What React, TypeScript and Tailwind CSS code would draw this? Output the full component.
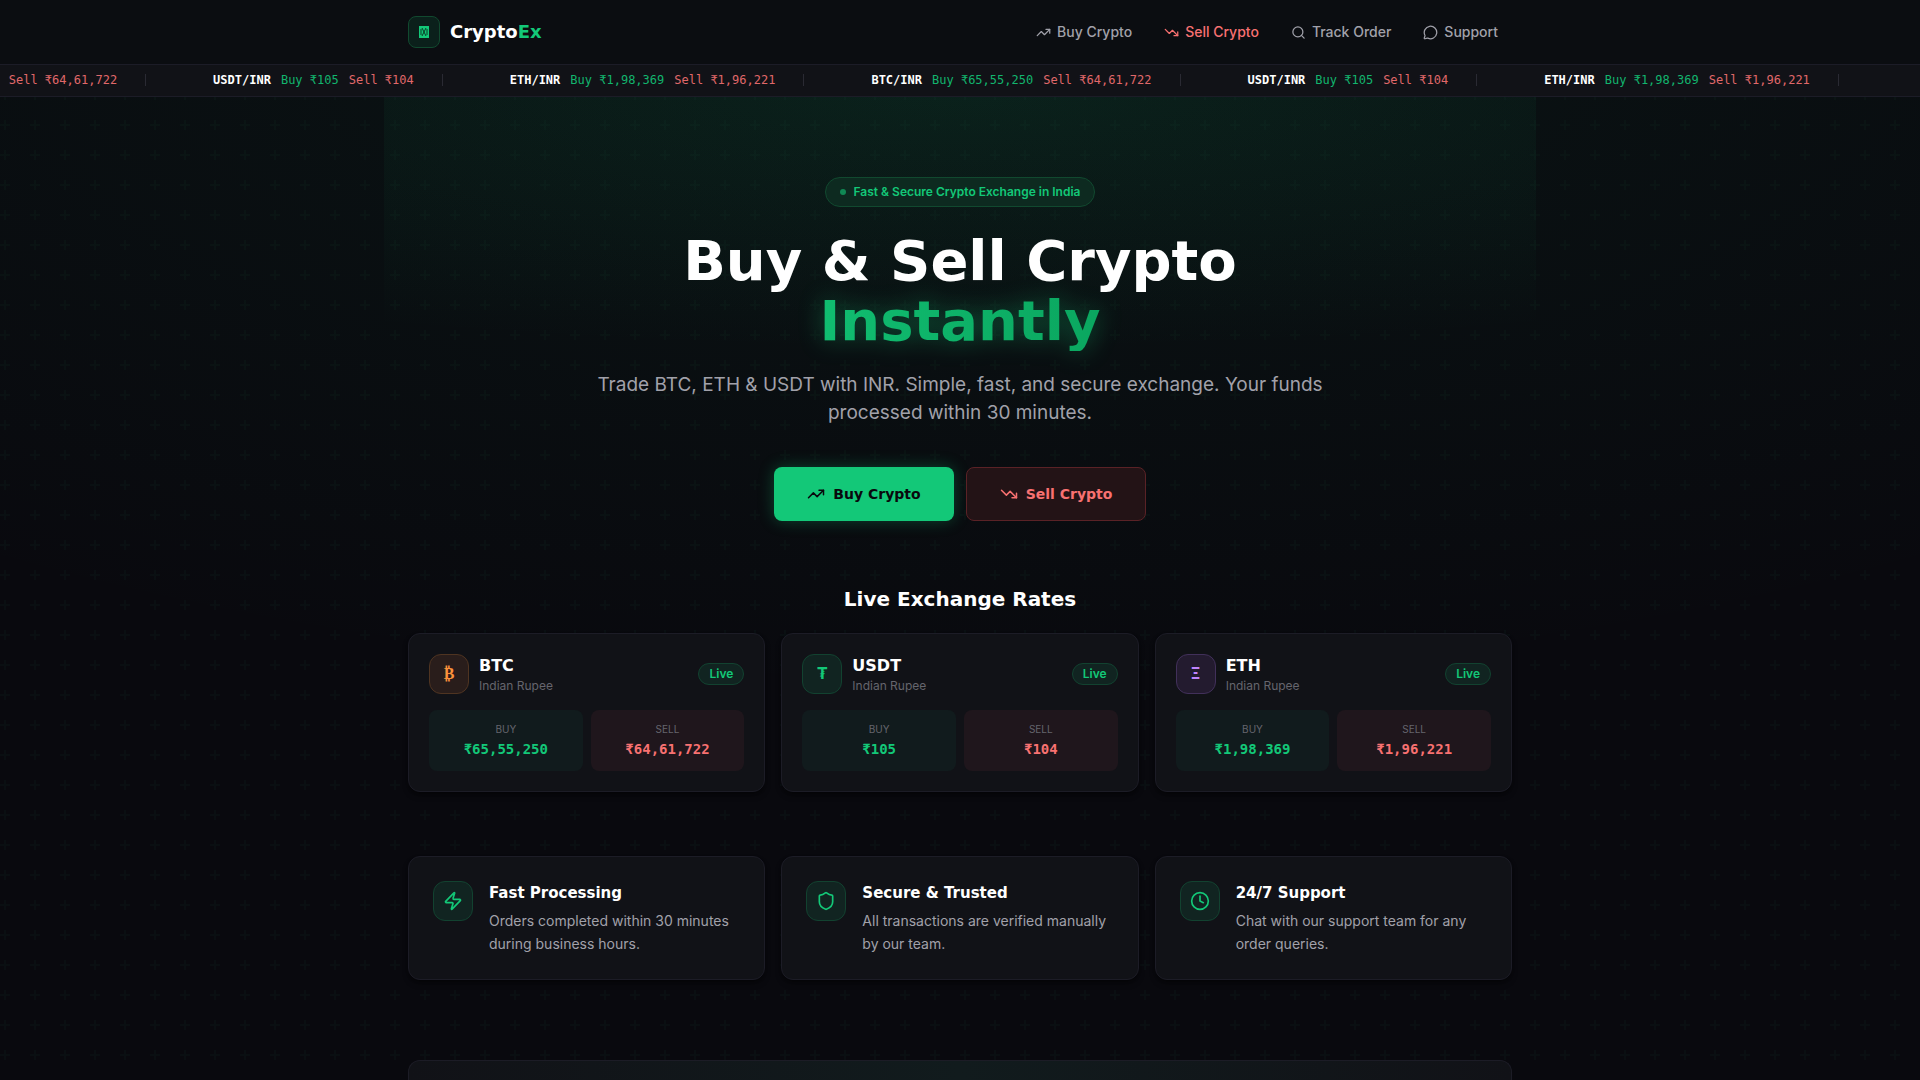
import type { ReactNode } from 'react'
import { Clock, MessageCircle, Search, Shield, TrendingDown, TrendingUp, Zap } from 'lucide-react'

const pairs = [
  { pair: 'BTC/INR', buy: '₹65,55,250', sell: '₹64,61,722' },
  { pair: 'USDT/INR', buy: '₹105', sell: '₹104' },
  { pair: 'ETH/INR', buy: '₹1,98,369', sell: '₹1,96,221' },
]

const tickerItems = [...pairs, ...pairs]

const rates = [
  {
    name: 'BTC',
    symbol: '₿',
    badge: 'border-[#4f3421] bg-[#291d1b] text-[#fb923c]',
    buy: '₹65,55,250',
    sell: '₹64,61,722',
  },
  {
    name: 'USDT',
    symbol: '₮',
    badge: 'border-[#124230] bg-[#112421] text-[#13c878]',
    buy: '₹105',
    sell: '₹104',
  },
  {
    name: 'ETH',
    symbol: 'Ξ',
    badge: 'border-[#41305a] bg-[#231b2f] text-[#c084fc]',
    buy: '₹1,98,369',
    sell: '₹1,96,221',
  },
]

const features = [
  {
    icon: Zap,
    title: 'Fast Processing',
    text: 'Orders completed within 30 minutes during business hours.',
  },
  {
    icon: Shield,
    title: 'Secure & Trusted',
    text: 'All transactions are verified manually by our team.',
  },
  {
    icon: Clock,
    title: '24/7 Support',
    text: 'Chat with our support team for any order queries.',
  },
]

function Backdrop() {
  return (
    <div className="pointer-events-none absolute inset-0 bg-[radial-gradient(ellipse_90%_65%_at_50%_0%,rgba(19,200,120,0.06),transparent)]">
      <svg className="h-full w-full text-[#13c878]" aria-hidden="true">
        <defs>
          <pattern id="plus" width="30" height="30" patternUnits="userSpaceOnUse">
            <path d="M6 4V0H4v4H0v2h4v4h2V6h4V4H6z" fill="currentColor" fillOpacity="0.03" />
          </pattern>
        </defs>
        <rect width="100%" height="100%" fill="url(#plus)" />
      </svg>
    </div>
  )
}

function NavLink({ icon, label, active }: { icon: ReactNode; label: string; active?: boolean }) {
  return (
    <a
      href="#"
      className={
        active
          ? 'flex items-center gap-1.5 px-3.5 py-2 text-sm font-medium text-[#f87171]'
          : 'flex items-center gap-1.5 px-3.5 py-2 text-sm font-medium text-[#a1a1aa] hover:text-white'
      }
    >
      {icon}
      {label}
    </a>
  )
}

function Navbar() {
  return (
    <header className="border-b border-[#1c1c27] bg-[#0b0d11]">
      <div className="mx-auto flex h-16 max-w-6xl items-center justify-between px-6">
        <a href="#" className="flex items-center gap-2.5">
          <span className="flex h-8 w-8 items-center justify-center rounded-lg border border-[#11492f] bg-[#0b201b]">
            <svg width="10" height="12" viewBox="0 0 10 12" aria-hidden="true">
              <rect width="10" height="12" fill="#13c878" />
              <path d="M3 2l4 8M7 2l-4 8M2 3v6M8 3v6" stroke="#0b3a27" />
            </svg>
          </span>
          <span className="font-['DejaVu_Sans',sans-serif] text-lg font-bold text-white">
            Crypto<span className="text-[#13c878]">Ex</span>
          </span>
        </a>
        <nav className="flex items-center gap-1">
          <NavLink icon={<TrendingUp size={15} />} label="Buy Crypto" />
          <NavLink icon={<TrendingDown size={15} />} label="Sell Crypto" active />
          <NavLink icon={<Search size={15} />} label="Track Order" />
          <NavLink icon={<MessageCircle size={15} />} label="Support" />
        </nav>
      </div>
    </header>
  )
}

function Ticker() {
  return (
    <div className="h-8 overflow-hidden border-b border-[#1c1c27] bg-[#111217]">
      <div className="-ml-[163px] flex h-full w-max items-center pb-0.5 font-['DejaVu_Sans_Mono',monospace] text-xs">
        {tickerItems.map((t, i) => (
          <div key={i} className="flex items-center whitespace-nowrap">
            <span className="mr-2.5 font-bold text-white">{t.pair}</span>
            <span className="mr-2.5 text-[#12b56e]">Buy {t.buy}</span>
            <span className="text-[#e0686a]">Sell {t.sell}</span>
            <span className="mr-[67px] ml-7 h-3 w-px bg-[#2a2a33]" />
          </div>
        ))}
      </div>
    </div>
  )
}

function Hero() {
  return (
    <section className="mx-auto flex w-full max-w-6xl flex-col items-center bg-[radial-gradient(ellipse_120%_60%_at_50%_0%,rgba(19,200,120,0.08),transparent)] px-6 pt-20 text-center">
      <div className="flex items-center gap-2 rounded-full border border-[#11492f] bg-[#0d2a20] px-3.5 py-1.5 text-xs font-semibold text-[#13c878]">
        <span className="h-1.5 w-1.5 rounded-full bg-[#13c878] opacity-60" />
        Fast &amp; Secure Crypto Exchange in India
      </div>
      <h1 className="mt-6 font-['DejaVu_Sans',sans-serif] text-[56px] leading-[60px] font-bold text-white">
        Buy &amp; Sell Crypto
        <span className="block bg-linear-to-r from-[#13c878] to-[#089c58] bg-clip-text text-transparent drop-shadow-[0_0_12px_rgba(19,200,120,0.4)]">
          Instantly
        </span>
      </h1>
      <p className="mt-5 max-w-3xl text-[19px] leading-7 text-[#a1a1aa]">
        Trade BTC, ETH &amp; USDT with INR. Simple, fast, and secure exchange. Your funds processed
        within 30 minutes.
      </p>
      <div className="mt-10 flex gap-3 font-['DejaVu_Sans',sans-serif] text-sm font-bold">
        <button className="flex h-[54px] w-[180px] items-center justify-center gap-2 rounded-lg bg-[#13c878] text-[#09090d] shadow-[0_0_16px_rgba(19,200,120,0.3)]">
          <TrendingUp size={18} />
          Buy Crypto
        </button>
        <button className="flex h-[54px] w-[180px] items-center justify-center gap-2 rounded-lg border border-[#5a2226] bg-[#231316] text-[#f87171]">
          <TrendingDown size={18} />
          Sell Crypto
        </button>
      </div>
    </section>
  )
}

function LiveRates() {
  return (
    <section className="mx-auto w-full max-w-6xl px-6 pt-16">
      <h2 className="mb-5 text-center font-['DejaVu_Sans',sans-serif] text-xl leading-7 font-bold text-white">
        Live Exchange Rates
      </h2>
      <div className="grid grid-cols-3 gap-4">
        {rates.map((r) => (
          <div key={r.name} className="rounded-xl border border-[#1c1c26] bg-[#111217] p-5 shadow-md shadow-black/40">
            <div className="mb-4 flex items-center gap-2.5">
              <span
                className={`flex h-10 w-10 items-center justify-center rounded-xl border font-['DejaVu_Sans_Mono',monospace] font-bold ${r.badge}`}
              >
                {r.symbol}
              </span>
              <div className="flex-1">
                <h3 className="font-['DejaVu_Sans',sans-serif] text-base leading-6 font-bold text-white">{r.name}</h3>
                <p className="text-xs text-[#65656d]">Indian Rupee</p>
              </div>
              <span className="rounded-full border border-[#124230] bg-[#112421] px-2.5 py-0.5 text-xs font-semibold text-[#13c878]">
                Live
              </span>
            </div>
            <div className="grid grid-cols-2 gap-2 text-center">
              <div className="rounded-lg bg-[#111b1d] py-3">
                <div className="mb-0.5 text-[10px] leading-[15px] text-[#65656d]">BUY</div>
                <div className="font-['DejaVu_Sans_Mono',monospace] text-sm font-bold text-[#13c878]">{r.buy}</div>
              </div>
              <div className="rounded-lg bg-[#1f161c] py-3">
                <div className="mb-0.5 text-[10px] leading-[15px] text-[#65656d]">SELL</div>
                <div className="font-['DejaVu_Sans_Mono',monospace] text-sm font-bold text-[#f87171]">{r.sell}</div>
              </div>
            </div>
          </div>
        ))}
      </div>
    </section>
  )
}

function Features() {
  return (
    <section className="mx-auto grid w-full max-w-6xl grid-cols-3 gap-4 px-6 pt-16">
      {features.map((f) => (
        <div key={f.title} className="flex gap-4 rounded-xl border border-[#1c1c26] bg-[#111217] p-6 shadow-md shadow-black/40">
          <span className="flex h-10 w-10 shrink-0 items-center justify-center rounded-xl border border-[#124230] bg-[#112421] text-[#13c878]">
            <f.icon size={20} />
          </span>
          <div>
            <h3 className="mb-1 font-['DejaVu_Sans',sans-serif] text-[15px] leading-6 font-bold text-white">{f.title}</h3>
            <p className="text-sm leading-[23px] text-[#a1a1aa]">{f.text}</p>
          </div>
        </div>
      ))}
    </section>
  )
}

export default function App() {
  return (
    <div className="relative min-h-screen bg-[#09090e] font-['Inter',sans-serif] antialiased">
      <Backdrop />
      <div className="relative flex min-h-screen flex-col">
        <Navbar />
        <Ticker />
        <main className="flex flex-1 flex-col">
          <Hero />
          <LiveRates />
          <Features />
          <section className="mx-auto flex w-full max-w-6xl flex-1 px-6 pt-20">
            <div className="flex-1 rounded-t-xl border-x border-t border-[#1c1c26] bg-linear-to-r from-[#111217] via-[#111b1d] to-[#111217]" />
          </section>
        </main>
      </div>
    </div>
  )
}
